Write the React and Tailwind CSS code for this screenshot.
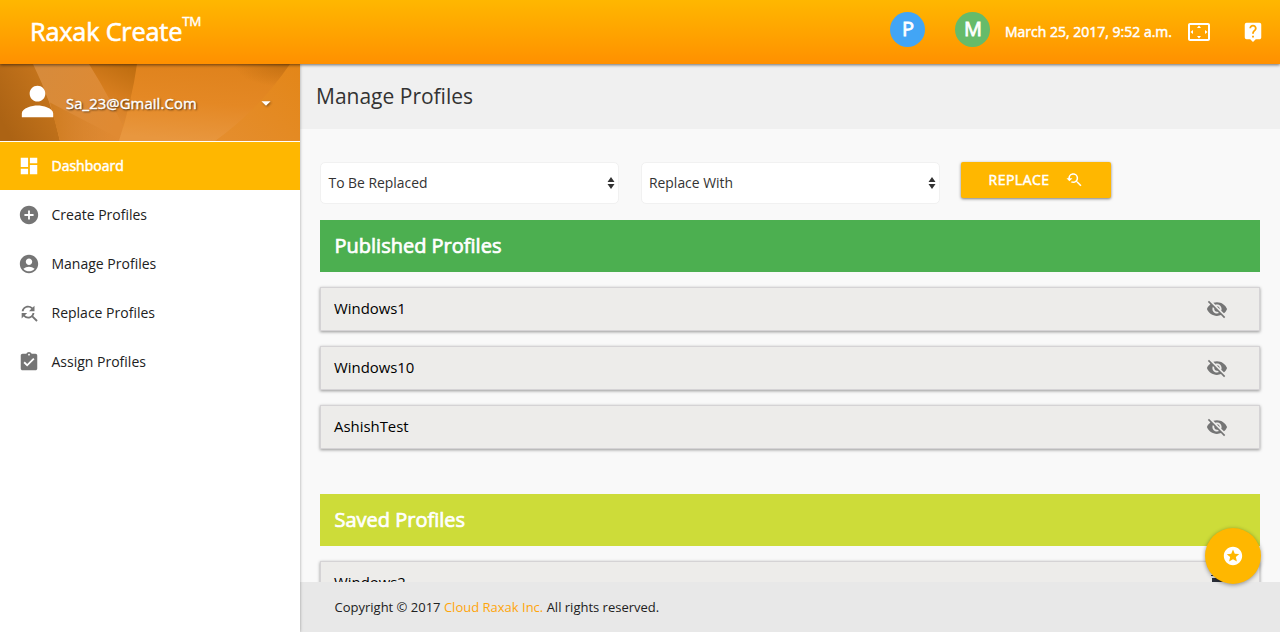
import {
  MdPerson, MdArrowDropDown, MdDashboard, MdAddCircle, MdAccountCircle, MdFindReplace,
  MdAssignmentTurnedIn, MdSettingsOverscan, MdLiveHelp, MdVisibilityOff, MdStars, MdYoutubeSearchedFor,
} from "react-icons/md";

const navItems = [
  { label: "Dashboard", icon: MdDashboard, active: true },
  { label: "Create Profiles", icon: MdAddCircle },
  { label: "Manage Profiles", icon: MdAccountCircle },
  { label: "Replace Profiles", icon: MdFindReplace },
  { label: "Assign Profiles", icon: MdAssignmentTurnedIn },
];

function Header() {
  return (
    <header className="relative z-20 flex h-16 shrink-0 items-center bg-linear-to-b from-[#ffb700] to-[#ff9000] text-white shadow-[0_1px_3px_rgba(0,0,0,0.55)]">
      <h1 className="mb-[3px] ml-[30px] flex flex-1 items-start text-[25.3px] leading-none tracking-[-0.2px] [-webkit-text-stroke:0.6px_white]">
        <span className="pt-[3px]">Raxak Create</span>
        <sup className="top-0 -mt-px text-[13.5px] leading-none tracking-[-0.3px] [-webkit-text-stroke:0.4px_white]">TM</sup>
      </h1>
      <div className="mb-[5px] flex size-[35px] items-center justify-center rounded-full bg-[#42a5f5] pb-[2px] pl-px text-xl leading-none [-webkit-text-stroke:0.8px_white]">P</div>
      <div className="mb-[5px] ml-[30px] flex size-[35px] items-center justify-center rounded-full bg-[#66bb6a] pb-[2px] pl-px text-xl leading-none [-webkit-text-stroke:0.8px_white]">M</div>
      <span className="mb-[2px] ml-[15px] w-[171px] text-[14px] whitespace-nowrap [-webkit-text-stroke:0.5px_white]">March 25, 2017, 9:52 a.m.</span>
      <MdSettingsOverscan className="ml-[11px] size-6" />
      <MdLiveHelp className="mr-4 ml-[31px] size-[22px]" />
    </header>
  );
}

function UserPanel() {
  return (
    <div className="relative h-[78px] shrink-0 overflow-hidden border-b border-white bg-[#e28720] text-white">
      <svg className="absolute inset-0 h-full w-full" viewBox="0 0 300 76" preserveAspectRatio="none">
        <defs>
          <linearGradient id="left" x1="0" x2="1" y1="0.7" y2="0">
            <stop offset="0" stopColor="#ac6314" />
            <stop offset="1" stopColor="#cd7a1e" />
          </linearGradient>
          <linearGradient id="band" x1="0" x2="1" y1="0" y2="0.3">
            <stop offset="0" stopColor="#d68b3c" />
            <stop offset="1" stopColor="#e08a32" />
          </linearGradient>
          <linearGradient id="lowband" x1="0" x2="1" y1="0" y2="0">
            <stop offset="0" stopColor="#cf7c20" />
            <stop offset="1" stopColor="#dd8630" stopOpacity="0" />
          </linearGradient>
          <linearGradient id="fold" x1="0.7" x2="0.4" y1="0" y2="1">
            <stop offset="0" stopColor="#c06e10" />
            <stop offset="0.4" stopColor="#d67d1e" />
            <stop offset="1" stopColor="#e59444" />
          </linearGradient>
          <linearGradient id="wide" x1="0.6" x2="0.4" y1="0" y2="1">
            <stop offset="0" stopColor="#df821c" />
            <stop offset="0.5" stopColor="#e48824" />
            <stop offset="1" stopColor="#e8973f" />
          </linearGradient>
          <radialGradient id="corner" cx="0.97" cy="0" r="0.3">
            <stop offset="0" stopColor="#bd6c10" stopOpacity="0.8" />
            <stop offset="1" stopColor="#bd6c10" stopOpacity="0" />
          </radialGradient>
          <linearGradient id="right" x1="0" x2="1" y1="1" y2="0">
            <stop offset="0" stopColor="#e58e2e" />
            <stop offset="1" stopColor="#e38618" />
          </linearGradient>
        </defs>
        <path d="M0 0H34Q52 38 60 76H0Z" fill="url(#left)" />
        <path d="M33 0H90Q112 36 130 76H60Q52 38 33 0Z" fill="url(#band)" />
        <path d="M50 38L60 76H124Z" fill="url(#lowband)" />
        <path d="M89 0H138Q132 36 119 76H130Q112 36 89 0Z" fill="url(#fold)" />
        <path d="M137 0H291Q258 46 216 76H119Q132 36 137 0Z" fill="url(#wide)" />
        <path d="M137 0H291Q258 46 216 76H119Q132 36 137 0Z" fill="url(#corner)" />
        <path d="M290 0H300V76H215Q258 46 290 0Z" fill="url(#right)" />
      </svg>
      <div className="relative flex h-full items-center">
        <MdPerson className="mb-[3px] ml-[14px] size-[47px]" />
        <span className="ml-[5px] flex-1 pt-[2px] text-[14.8px] tracking-[0.12px] [-webkit-text-stroke:0.4px_white] [text-shadow:1px_1px_2px_rgba(0,0,0,0.8)]">Sa_23@Gmail.Com</span>
        <MdArrowDropDown className="mr-[23px] size-[22px] drop-shadow-[1px_1px_1px_rgba(0,0,0,0.4)]" />
      </div>
    </div>
  );
}

function Sidebar() {
  return (
    <aside className="relative z-10 flex w-[300px] shrink-0 flex-col bg-white shadow-[0_0_3px_rgba(0,0,0,0.35)]">
      <UserPanel />
      <nav>
        {navItems.map(({ label, icon: Icon, active }) => (
          <a key={label} className={active
            ? "flex h-[48px] items-center bg-[#ffb700] pb-px pl-[18px] text-[14px] text-white [-webkit-text-stroke:0.5px_white]"
            : "flex h-[49px] items-center pl-[18px] text-[14px] text-[#212121]"}>
            <Icon className={active ? "size-[22px]" : "size-[22px] text-[#757575]"} strokeWidth={0} />
            <span className="ml-[11.5px]">{label}</span>
          </a>
        ))}
      </nav>
    </aside>
  );
}

function Select({ label }) {
  return (
    <button className="flex h-[42px] w-[299px] items-center justify-between rounded-[5px] border border-[#f1f1f1] bg-white pr-[3px] pl-[7.5px] text-[13.9px] text-[#333]">
      <span>{label}</span>
      <svg width="8" height="14" viewBox="0 0 8 14" fill="#333"><path d="M4 1l3.500 5h-7zM4 13L.5 8h7z" /></svg>
    </button>
  );
}

function ProfileRow({ name, children }) {
  return (
    <div className="flex h-[44px] items-center justify-between border border-[#d5d3d5] bg-[#edecea] pr-[31px] pl-[13px] text-[14.9px] text-black shadow-[0_1px_3px_rgba(0,0,0,0.4)]">
      <span className="pb-[2px]">{name}</span>
      {children}
    </div>
  );
}

export default function App() {
  return (
    <div className="flex h-[632px] w-full flex-col overflow-hidden bg-[#f9f9f9] font-['Open_Sans',sans-serif]">
      <Header />
      <div className="flex min-h-0 flex-1">
        <Sidebar />
        <main className="relative flex min-w-0 flex-1 flex-col">
          <div className="flex h-[65px] shrink-0 items-center bg-[#f0f0f0] pl-4 text-[21px] text-[#333]">Manage Profiles</div>
          <div className="min-h-0 flex-1 overflow-hidden px-5 pt-[33px]">
            <div className="flex h-[58px] items-start">
              <Select label="To Be Replaced" />
              <div className="ml-[21.5px] flex"><Select label="Replace With" /></div>
              <button className="ml-[21.5px] flex h-9 w-[150px] items-center rounded-[2px] bg-[#ffb700] pl-[27.5px] text-[14px] text-white shadow-[0_1px_3px_rgba(0,0,0,0.5)]">
                <span className="pb-px tracking-[0.5px] [-webkit-text-stroke:0.5px_white]">REPLACE</span>
                <MdYoutubeSearchedFor className="ml-[15px] size-[18px]" />
              </button>
            </div>
            <h2 className="flex h-[52px] items-center bg-[#4caf50] pl-[14.5px] text-xl text-white [-webkit-text-stroke:0.7px_white]">Published Profiles</h2>
            <div className="mt-[15px] flex flex-col gap-[15px]">
              {["Windows1", "Windows10", "AshishTest"].map((name) => (
                <ProfileRow key={name} name={name}><MdVisibilityOff className="size-[22px] text-[#757575]" /></ProfileRow>
              ))}
            </div>
            <h2 className="mt-[45px] mb-[15px] flex h-[52px] items-center bg-[#cddc39] pl-[14.5px] text-xl text-white [-webkit-text-stroke:0.7px_white]">Saved Profiles</h2>
            <ProfileRow name="Windows2">
              <svg width="17" height="18" viewBox="0 0 17 18" fill="#2b303b"><path d="M0 1h17v1H0zM1 4h15V18H1z" /></svg>
            </ProfileRow>
          </div>
          <footer className="flex h-[50px] shrink-0 items-center bg-[#e8e8e8] pt-px pl-[34.5px] text-[13px] text-[#212121]">
            <span>Copyright © 2017 <a className="text-[#ffa50a]">Cloud Raxak Inc.</a> All rights reserved.</span>
          </footer>
          <button className="absolute right-[19px] bottom-12 flex size-14 items-center justify-center rounded-full bg-[#ffb700] text-white shadow-[0_1px_4px_rgba(0,0,0,0.4)]">
            <MdStars className="size-[22px]" />
          </button>
        </main>
      </div>
    </div>
  );
}
